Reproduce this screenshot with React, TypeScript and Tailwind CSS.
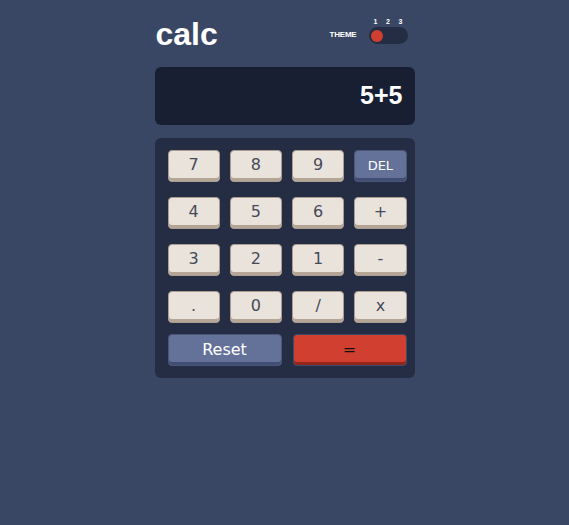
import React from 'react';

const keys = ['7', '8', '9', 'DEL', '4', '5', '6', '+', '3', '2', '1', '-', '.', '0', '/', 'x'];

const Key: React.FC<{ label: string }> = ({ label }) => {
  if (label === 'DEL') {
    return (
      <button className="h-[32px] rounded-[4px] border border-[#4b5679] bg-[#647198] text-[13px] text-white shadow-[inset_0_-3px_0_#414e73] font-['DejaVu_Sans',sans-serif]">
        DEL
      </button>
    );
  }
  return (
    <button className="h-[32px] rounded-[4px] border border-[#ab9d90] bg-[#eae3dc] pb-[2px] text-[16px] text-[#434a59] shadow-[inset_0_-3px_0_#b4a597] font-['DejaVu_Sans',sans-serif]">
      {label}
    </button>
  );
};

export default function App() {
  return (
    <div className="min-h-[525px] bg-[#3a4764] font-['Liberation_Sans',sans-serif]">
      <div className="mx-auto w-[260px] pt-[14px]">
        {/* Header */}
        <header className="flex h-[53px] items-start justify-between pr-[7px]">
          <h1 className="pl-[1px] text-[32px] font-bold leading-[40px] text-white">calc</h1>
          <div className="flex items-end gap-[12px] pt-[3px]">
            <span className="mb-[3px] text-[8px] font-bold tracking-[-0.2px] text-white">THEME</span>
            <div className="flex flex-col">
              <div className="flex justify-between px-[5px] text-[7px] font-bold leading-[9px] text-white">
                <span>1</span>
                <span>2</span>
                <span>3</span>
              </div>
              <div className="mt-[1px] flex h-[17px] w-[39px] items-center rounded-full bg-[#242d44] px-[2px]">
                <div className="h-[12px] w-[12px] rounded-full bg-[#d03f2f]" />
              </div>
            </div>
          </div>
        </header>

        {/* Screen */}
        <div className="flex h-[58px] items-center justify-end rounded-[6px] bg-[#181f33] pr-[12px]">
          <span className="text-[25px] font-bold text-white">5+5</span>
        </div>

        {/* Keypad */}
        <div className="mt-[13px] rounded-[6px] bg-[#242d44] pb-[12px] pl-[13px] pr-[8px] pt-[12px]">
          <div className="grid grid-cols-4 gap-x-[10px] gap-y-[15px]">
            {keys.map((k) => (
              <Key key={k} label={k} />
            ))}
          </div>
          <div className="mt-[11px] grid grid-cols-2 gap-x-[11px]">
            <button className="h-[32px] rounded-[4px] border border-[#4b5679] bg-[#647198] text-[16px] text-white shadow-[inset_0_-3px_0_#414e73] font-['DejaVu_Sans',sans-serif]">
              Reset
            </button>
            <button className="h-[32px] rounded-[4px] border border-[#3d4a6b] bg-[#d13f30] text-[16px] text-[#111] shadow-[inset_0_-3px_0_#93261a] font-['DejaVu_Sans',sans-serif]">
              =
            </button>
          </div>
        </div>
      </div>
    </div>
  );
}
